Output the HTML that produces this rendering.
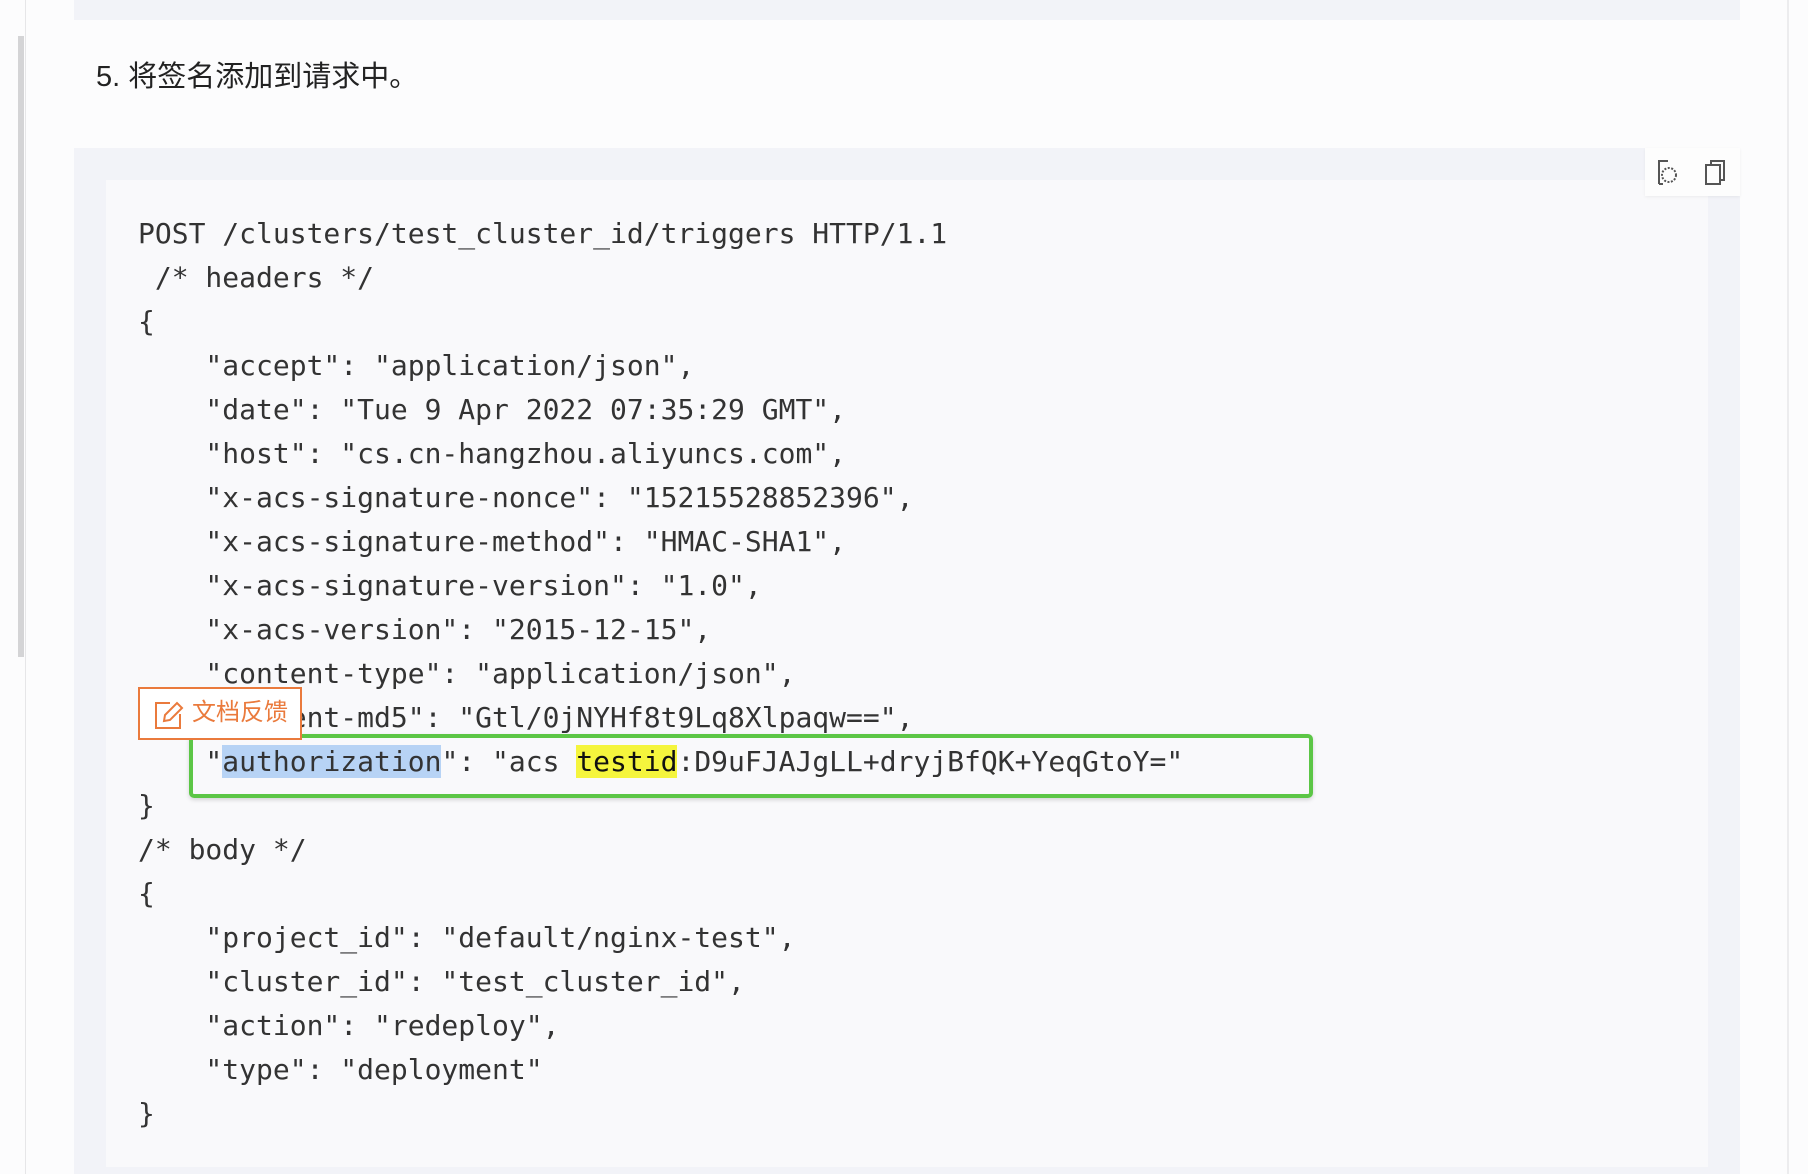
<!DOCTYPE html>
<html><head><meta charset="utf-8"><style>
html,body{margin:0;padding:0;width:1808px;height:1174px;overflow:hidden;background:#fcfcfd;position:relative}
.abs{position:absolute}
.mono{font-family:"DejaVu Sans Mono","Liberation Mono",monospace;font-size:28px;color:#333;white-space:pre;line-height:44px}
</style></head><body>
<div class="abs" style="left:25px;top:0;width:1px;height:1174px;background:#e6e6e8"></div>
<div class="abs" style="left:18px;top:36px;width:6px;height:621px;background:#d4d4d6"></div>
<div class="abs" style="left:1787px;top:0;width:2px;height:1174px;background:#ececee"></div>
<div class="abs" style="left:74px;top:0;width:1666px;height:20px;background:#f2f3f8"></div>
<div class="abs" style="left:96px;top:57px;font-family:'Liberation Sans','Noto Sans CJK SC',sans-serif;font-size:29px;color:#222;line-height:40px">5. 将签名添加到请求中。</div>
<div class="abs" style="left:74px;top:148px;width:1666px;height:1026px;background:#f2f3f8"></div>
<div class="abs" style="left:106px;top:180px;width:1602px;height:987px;background:#f9f9fb"></div>
<div class="abs" style="left:1645px;top:148px;width:95px;height:48px;background:#fdfdfd;box-shadow:0 1px 3px rgba(0,0,0,0.06)">
<svg width="95" height="48"><g fill="none" stroke="#555" stroke-width="2"><path d="M14 36V13h9"/><path d="M14 36h4"/><circle cx="24" cy="27" r="7" stroke-dasharray="2 1.5"/><rect x="61" y="17" width="14" height="19"/><path d="M66 17v-4h13v19h-4"/></g></svg>
</div>
<div class="abs mono" style="left:138px;top:212px">POST /clusters/test_cluster_id/triggers HTTP/1.1
 /* headers */
{
    "accept": "application/json",
    "date": "Tue 9 Apr 2022 07:35:29 GMT",
    "host": "cs.cn-hangzhou.aliyuncs.com",
    "x-acs-signature-nonce": "15215528852396",
    "x-acs-signature-method": "HMAC-SHA1",
    "x-acs-signature-version": "1.0",
    "x-acs-version": "2015-12-15",
    "content-type": "application/json",
    "content-md5": "Gtl/0jNYHf8t9Lq8Xlpaqw==",
    "<span style="background:#b7d3f5">authorization</span>": "acs <span style="background:#f5f53d;color:#111">testid</span>:D9uFJAJgLL+dryjBfQK+YeqGtoY="
}
/* body */
{
    "project_id": "default/nginx-test",
    "cluster_id": "test_cluster_id",
    "action": "redeploy",
    "type": "deployment"
}</div>
<div class="abs" style="left:189px;top:734px;width:1116px;height:56px;border:4px solid #5cc646;border-radius:5px;box-shadow:0 2px 4px rgba(0,0,0,0.15)"></div>
<div class="abs" style="left:138px;top:687px;width:164px;height:53px;border:2px solid #ea7a3c;background:#fff;box-sizing:border-box">
<svg class="abs" style="left:13px;top:10px" width="32" height="32"><g fill="none" stroke="#ea7a3c" stroke-width="2"><path d="M17 4H3v25h24V15"/><path d="M11 22l1-6 12-12 5 5-12 12z"/></g></svg>
<div class="abs" style="left:52px;top:7px;font-family:'Liberation Sans','Noto Sans CJK SC',sans-serif;font-size:24px;color:#ea7a3c;line-height:34px">文档反馈</div>
</div>
</body></html>
